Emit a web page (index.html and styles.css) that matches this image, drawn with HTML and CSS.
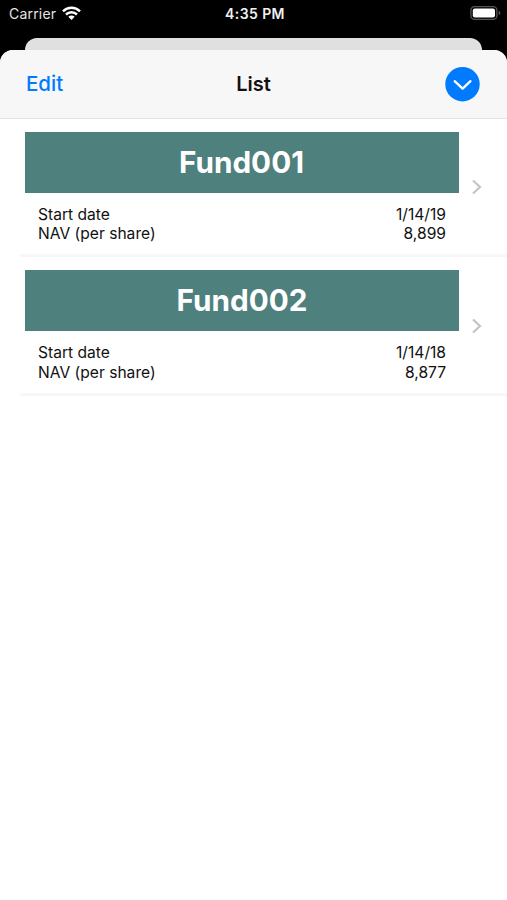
FILE: index.html
```html
<!DOCTYPE html>
<html lang="en">
<head>
<meta charset="utf-8">
<title>List</title>
<link rel="stylesheet" href="styles.css">
</head>
<body>
<div class="status">
  <div class="carrier"><span>Carrier</span>
    <svg class="wifi" width="19" height="14" viewBox="0 0 19 14" fill="none" stroke="#fff" stroke-width="2.5"><path d="M1 5.300a12.200 12.200 0 0 1 17 0M4 8.500a7.900 7.900 0 0 1 11 0"/><path d="M6.300 10.700a4.600 4.600 0 0 1 6.400 0L9.500 13.900z" fill="#fff" stroke="none"/></svg>
  </div>
  <span class="time">4:35 PM</span>
  <svg class="battery" width="31" height="14" viewBox="0 0 31 14"><rect x=".9" y=".7" width="26" height="12.600" rx="3.600" fill="none" stroke="#555" stroke-width="1.300"/><rect x="2.800" y="2.500" width="22.200" height="9" rx="2" fill="#fff"/><path d="M28.700 4.800q1.800.7 1.800 2.200t-1.800 2.200z" fill="#555"/></svg>
</div>
<div class="back-card"></div>
<main class="sheet">
  <header class="navbar">
    <span class="edit">Edit</span>
    <h1 class="title">List</h1>
    <svg class="dismiss" width="35" height="35" viewBox="0 0 35 35"><circle cx="17.500" cy="17.200" r="17.200" fill="#007aff"/><path d="M9.700 14.200l7.900 7.400 7.900-7.400" fill="none" stroke="#fff" stroke-width="2.300" stroke-linecap="round" stroke-linejoin="round"/></svg>
  </header>
  <section class="row">
    <div class="fund">
      <h2 class="banner first">Fund001</h2>
      <div class="line"><span>Start date</span><span>1/14/19</span></div>
      <div class="line"><span>NAV (per share)</span><span>8,899</span></div>
    </div>
    <svg class="chevron" width="10" height="16" viewBox="0 0 10 16" fill="none" stroke="#c4c4c6" stroke-width="2.200"><path d="M1 1.500l7 6.500-7 6.500"/></svg>
  </section>
  <section class="row">
    <div class="fund">
      <h2 class="banner">Fund002</h2>
      <div class="line"><span>Start date</span><span>1/14/18</span></div>
      <div class="line"><span>NAV (per share)</span><span>8,877</span></div>
    </div>
    <svg class="chevron" width="10" height="16" viewBox="0 0 10 16" fill="none" stroke="#c4c4c6" stroke-width="2.200"><path d="M1 1.500l7 6.500-7 6.500"/></svg>
  </section>
</main>
</body>
</html>
```
FILE: styles.css
```css
* { box-sizing: border-box; }
body {
  margin: 0;
  height: 900px;
  display: flex;
  flex-direction: column;
  overflow: hidden;
  background: #000;
  color: #111;
  font-family: Inter, "Liberation Sans", sans-serif;
}
h1, h2 { margin: 0; }
svg { display: block; flex: none; }
.status {
  height: 38px;
  padding: 4px 6px 0 9px;
  display: grid;
  grid-template-columns: 1fr auto 1fr;
  align-items: start;
  color: #fff;
  font-size: 14px;
  line-height: 20px;
}
.carrier { display: flex; gap: 6px; color: #e4e4e4; letter-spacing: 0.2px; }
.wifi { margin-top: 2px; }
.time { font-weight: 600; color: #f0f0f0; font-size: 14px; letter-spacing: 0.4px; }
.battery { justify-self: end; margin-top: 2px; }
.back-card {
  height: 12px;
  margin: 0 25px;
  background: #e0e0e0;
  border-radius: 12px 12px 0 0;
}
.sheet {
  flex: 1;
  background: #fff;
  border-radius: 13px 13px 0 0;
  overflow: hidden;
}
.navbar {
  height: 69px;
  padding: 0 27px 0 26px;
  display: grid;
  grid-template-columns: 1fr auto 1fr;
  align-items: center;
  background: #f7f7f7;
  border-bottom: 1px solid #e2e2e2;
  font-size: 20.5px;
  line-height: 24px;
}
.edit { color: #007aff; font-weight: 500; }
.title { padding-left: 1px; font-size: 20px; font-weight: 600; }
.dismiss { justify-self: end; }
.row {
  height: 138.4px;
  margin-left: 20px;
  padding: 12.7px 25px 0 5px;
  display: flex;
  justify-content: space-between;
  border-bottom: 3px solid #f7f7f7;
}
.fund { width: 434px; }
.banner {
  height: 61px;
  margin-bottom: 12.4px;
  background: #4e807d;
  color: #fff;
  font-size: 29.7px;
  font-weight: 700;
  line-height: 61px;
  text-align: center;
}
.first { padding-right: 1px; }
.line {
  display: flex;
  justify-content: space-between;
  padding: 0 13px;
  font-size: 15.6px;
  line-height: 19.3px;
}
.chevron { margin-top: 47.8px; }
```
